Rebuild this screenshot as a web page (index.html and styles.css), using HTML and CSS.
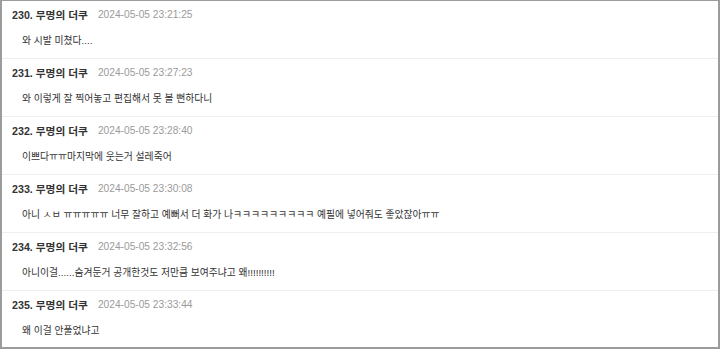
FILE: index.html
```html
<!DOCTYPE html>
<html lang="ko">
<head>
    <meta charset="UTF-8">
    <meta name="viewport" content="width=device-width, initial-scale=1.0">
    <title>댓글</title>
    <link rel="stylesheet" href="styles.css">
</head>
<body>

<!-- Comment list -->
<div class="comments">
    <div class="comment">
        <div class="comment-head"><span class="comment-name">230. 무명의 더쿠</span><span class="comment-date">2024-05-05 23:21:25</span></div>
        <div class="comment-body">와 시발 미쳤다....</div>
    </div>
    <div class="comment">
        <div class="comment-head"><span class="comment-name">231. 무명의 더쿠</span><span class="comment-date">2024-05-05 23:27:23</span></div>
        <div class="comment-body">와 이렇게 잘 찍어놓고 편집해서 못 볼 뻔하다니</div>
    </div>
    <div class="comment">
        <div class="comment-head"><span class="comment-name">232. 무명의 더쿠</span><span class="comment-date">2024-05-05 23:28:40</span></div>
        <div class="comment-body">이쁘다ㅠㅠ마지막에 웃는거 설레죽어</div>
    </div>
    <div class="comment">
        <div class="comment-head"><span class="comment-name">233. 무명의 더쿠</span><span class="comment-date">2024-05-05 23:30:08</span></div>
        <div class="comment-body">아니 ㅅㅂ ㅠㅠㅠㅠㅠ 너무 잘하고 예뻐서 더 화가 나ㅋㅋㅋㅋㅋㅋㅋㅋㅋ 예필에 넣어줘도 좋았잖아ㅠㅠ</div>
    </div>
    <div class="comment">
        <div class="comment-head"><span class="comment-name">234. 무명의 더쿠</span><span class="comment-date">2024-05-05 23:32:56</span></div>
        <div class="comment-body">아니이걸......숨겨둔거 공개한것도 저만큼 보여주냐고 왜!!!!!!!!!!</div>
    </div>
    <div class="comment">
        <div class="comment-head"><span class="comment-name">235. 무명의 더쿠</span><span class="comment-date">2024-05-05 23:33:44</span></div>
        <div class="comment-body">왜 이걸 안풀었냐고</div>
    </div>
</div>

</body>
</html>
```

FILE: styles.css
```css
* {
    box-sizing: border-box;
}
body {
    margin: 0;
    font-family: "Liberation Sans", "Noto Sans CJK KR", sans-serif;
    font-size: 10px;
    color: #333;
    background: #fff;
}
.comments {
    height: 349px;
    overflow: hidden;
    border: 2px solid #9c9c9c;
    border-top-width: 1px;
    background: #fff;
}
.comment {
    padding: 6px 10px 9px;
    border-bottom: 1px solid #efefef;
}
.comment:last-child {
    border-bottom: none;
}
.comment-head {
    display: flex;
    align-items: center;
    height: 16px;
    line-height: 16px;
}
.comment-name {
    font-size: 10.7px;
    font-weight: bold;
    color: #333;
}
.comment-date {
    margin-left: 10px;
    font-size: 10.2px;
    color: #9a9a9a;
}
.comment-body {
    margin-top: 10px;
    padding-left: 10px;
    font-size: 9.8px;
    line-height: 16px;
    color: #333;
}
```
